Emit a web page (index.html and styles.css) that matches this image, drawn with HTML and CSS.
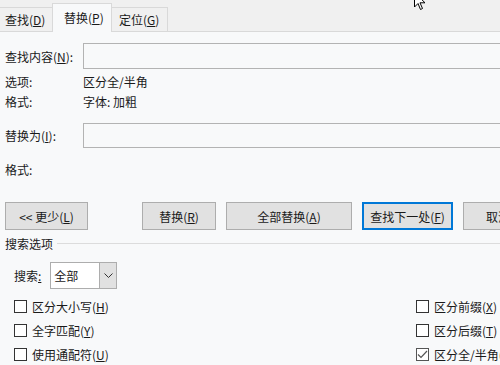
FILE: index.html
```html
<!DOCTYPE html>
<html lang="zh-CN">
<head>
  <meta charset="UTF-8">
  <title>查找和替换</title>
  <link rel="stylesheet" href="styles.css">
</head>
<body>

  <div class="tabs">
    <div class="tab">查找(<u>D</u>)</div>
    <div class="tab active">替换(<u>P</u>)</div>
    <div class="tab">定位(<u>G</u>)</div>
  </div>

  <div class="panel">
    <div class="field-row find-row">
      <span class="label">查找内容(<u>N</u>):</span>
      <div class="input"></div>
    </div>
    <div class="info-row">
      <span class="label">选项:</span>
      <span>区分全/半角</span>
    </div>
    <div class="info-row">
      <span class="label">格式:</span>
      <span>字体: 加粗</span>
    </div>

    <div class="field-row replace-row">
      <span class="label">替换为(<u>I</u>):</span>
      <div class="input short"></div>
    </div>
    <div class="info-row format-row">
      <span class="label">格式:</span>
    </div>

    <div class="buttons">
      <button class="button less">&lt;&lt; 更少(<u>L</u>)</button>
      <button class="button replace">替换(<u>R</u>)</button>
      <button class="button replace-all">全部替换(<u>A</u>)</button>
      <button class="button find-next">查找下一处(<u>F</u>)</button>
      <button class="button cancel">取消</button>
    </div>

    <div class="group-title">
      <span>搜索选项</span>
      <div class="rule"></div>
    </div>

    <div class="search-row">
      <span>搜索<u>:</u></span>
      <div class="select">
        <span class="select-value">全部</span>
        <span class="select-arrow">
          <svg width="9" height="5" viewBox="0 0 9 5"><path d="M0.5 0.5 L4.5 4.5 L8.5 0.5" fill="none" stroke="#333" stroke-width="1"/></svg>
        </span>
      </div>
    </div>

    <div class="checks">
      <div class="col">
        <label class="check"><span class="box"></span><span>区分大小写(<u>H</u>)</span></label>
        <label class="check"><span class="box"></span><span>全字匹配(<u>Y</u>)</span></label>
        <label class="check"><span class="box"></span><span>使用通配符(<u>U</u>)</span></label>
      </div>
      <div class="col">
        <label class="check"><span class="box"></span><span>区分前缀(<u>X</u>)</span></label>
        <label class="check"><span class="box"></span><span>区分后缀(<u>T</u>)</span></label>
        <label class="check"><span class="box checked"><svg width="11" height="11" viewBox="0 0 11 11"><path d="M1 5.5 L4 8.5 L10 2" fill="none" stroke="#555" stroke-width="1.2"/></svg></span><span>区分全/半角(<u>M</u>)</span></label>
      </div>
    </div>
  </div>

  <svg class="cursor" width="12" height="19" viewBox="0 0 12 19">
    <path d="M0.5 0.5 L0.5 15 L4 11.5 L6.5 17.5 L8.5 16.5 L6 10.8 L11 10.8 Z" fill="#fff" stroke="#000" stroke-width="1"/>
  </svg>

</body>
</html>
```

FILE: styles.css
```css
body {
  margin: 0;
  padding: 0;
  width: 500px;
  height: 365px;
  overflow: hidden;
  background-color: #f8f9fa;
  font-family: 'Noto Sans CJK SC', 'Noto Sans', sans-serif;
  font-size: 12px;
  color: #1a1a1a;
  position: relative;
}
u {
  text-decoration-thickness: 1px;
  text-underline-offset: 1px;
}
.tabs {
  display: flex;
  align-items: flex-end;
  height: 31px;
  background-color: #f0f0f0;
  border-bottom: 1px solid #d9d9d9;
}
.tab {
  height: 24px;
  line-height: 24px;
  padding: 0 6px;
  border: 1px solid #d9d9d9;
  border-bottom: none;
  border-left: none;
  box-sizing: border-box;
  background-color: #f0f0f0;
}
.tab:first-child {
  width: 53px;
  padding-left: 5px;
}
.tab.active {
  width: 60px;
  height: 29px;
  line-height: 27px;
  margin-bottom: -1px;
  padding-left: 11px;
  background-color: #f8f9fa;
  border-left: 1px solid #d9d9d9;
  margin-left: -1px;
}
.tab:last-child {
  width: 56px;
  padding-left: 7px;
}
.panel {
  padding-left: 5px;
  width: 600px;
}
.label {
  display: inline-block;
  width: 78px;
}
.field-row {
  display: flex;
  align-items: center;
}
.find-row {
  margin-top: 11px;
}
.input {
  flex: 1;
  height: 26px;
  box-sizing: border-box;
  background-color: #f8f9fa;
  border: 1px solid #b3b3b3;
}
.input.short {
  height: 25px;
}
.info-row {
  display: flex;
  height: 20px;
  line-height: 20px;
}
.find-row + .info-row {
  margin-top: 3px;
}
.replace-row {
  margin-top: 11px;
}
.format-row {
  margin-top: 12px;
}
.buttons {
  display: flex;
  margin-top: 22px;
  gap: 10px;
}
.button {
  height: 28px;
  box-sizing: border-box;
  font-family: inherit;
  font-size: 12px;
  color: #1a1a1a;
  background-color: #e1e1e1;
  border: 1px solid #adadad;
  padding: 0;
  flex-shrink: 0;
}
.less {
  width: 83px;
  margin-right: 44px;
}
.replace {
  width: 74px;
}
.replace-all {
  width: 126px;
}
.find-next {
  width: 91px;
  border: 2px solid #0078d7;
}
.cancel {
  width: 91px;
  text-align: left;
  padding-left: 22px;
}
.group-title {
  display: flex;
  align-items: center;
  height: 16px;
  margin-top: 5px;
  gap: 4px;
}
.rule {
  flex: 1;
  height: 1px;
  background-color: #dcdcdc;
}
.search-row {
  display: flex;
  align-items: center;
  margin-top: 11px;
  padding-left: 9px;
  gap: 9px;
}
.select {
  display: flex;
  width: 67px;
  height: 27px;
  box-sizing: border-box;
  border: 1px solid #adadad;
  background-color: #fff;
}
.select-value {
  flex: 1;
  line-height: 25px;
  padding-left: 3px;
}
.select-arrow {
  width: 16px;
  background-color: #e1e1e1;
  border-left: 1px solid #adadad;
  display: flex;
  align-items: center;
  justify-content: center;
}
.checks {
  display: flex;
  margin-top: 7px;
  padding-left: 9px;
}
.col {
  display: flex;
  flex-direction: column;
  gap: 4px;
}
.col:first-child {
  width: 402px;
}
.check {
  display: flex;
  align-items: center;
  height: 20px;
  gap: 5px;
  white-space: nowrap;
}
.box {
  width: 13px;
  height: 13px;
  flex-shrink: 0;
  box-sizing: border-box;
  border: 1px solid #333;
  background-color: #fff;
  display: flex;
  align-items: center;
  justify-content: center;
}
.box.checked {
  border-color: #555;
}
.cursor {
  position: absolute;
  left: 414px;
  top: -8px;
}
```
